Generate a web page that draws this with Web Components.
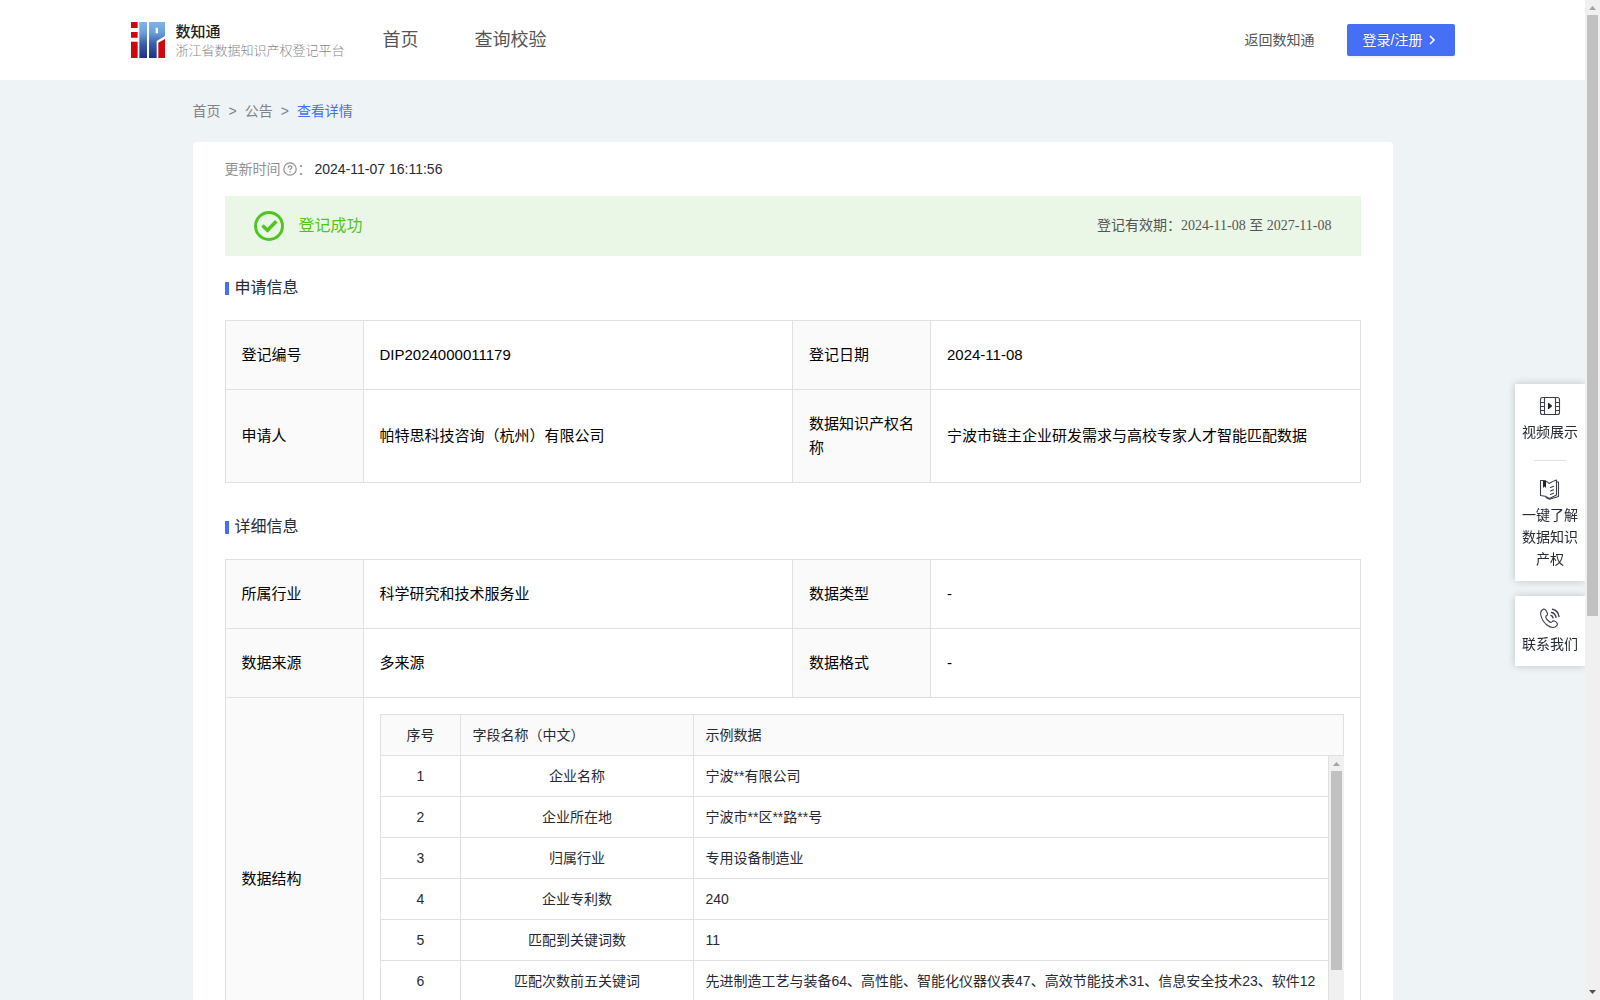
<!DOCTYPE html>
<html lang="zh-CN">
<head>
<meta charset="utf-8">
<title>数知通 - 查看详情</title>
<style>
  html, body { margin: 0; height: 100%; }
  body {
    overflow: hidden;
    background: #eef3f6;
    color: #262a35;
    font: 14px/22px "Liberation Sans", "Noto Sans CJK SC", sans-serif;
  }
</style>
</head>
<body>
<registry-page></registry-page>

<script>
const define = (name, html, setup) => {
  const tpl = document.createElement('template');
  tpl.innerHTML = html;
  customElements.define(name, class extends HTMLElement {
    connectedCallback() {
      if (this.shadowRoot) return;
      const root = this.attachShadow({ mode: 'open' });
      root.append(tpl.content.cloneNode(true));
      if (setup) setup(root, this);
    }
  });
};

/* Scroll rail with arrows; --thumb is the thumb length */
define('scroll-rail', `
<style>
  :host { display: flex; flex-direction: column; align-items: center; width: 15px; flex: none; background: #f0f0f0; }
  svg { display: block; width: 15px; height: 15px; flex: none; }
  .thumb { width: 11px; height: var(--thumb); background: #c1c1c1; flex: none; }
  .rest { flex: 1; }
</style>
<svg viewBox="0 0 15 15"><path d="M4 10L7.500 6L11 10Z" fill="#a3a3a3"/></svg>
<div class="thumb"></div><div class="rest"></div>
<svg viewBox="0 0 15 15"><path d="M4 5L7.500 9L11 5Z" fill="#505050"/></svg>`);

define('brand-logo', `
<style>
  :host { display: block; }
  a { display: flex; align-items: center; gap: 11px; text-decoration: none; font-family: "Noto Sans CJK SC", sans-serif; }
  svg { width: 34px; height: 36px; flex: none; }
  b { display: block; font-size: 15px; line-height: 20px; font-weight: 500; color: #222; }
  small { display: block; font-size: 13px; line-height: 18px; font-weight: 300; color: #888; }
</style>
<a href="#">
  <svg viewBox="0 0 102 108" aria-hidden="true">
    <defs><linearGradient id="g" gradientUnits="userSpaceOnUse" x1="0" y1="0" x2="0" y2="108">
      <stop offset="0" stop-color="#7fb4e8"/><stop offset=".3" stop-color="#6a9fdb"/><stop offset=".6" stop-color="#3c5fae"/><stop offset="1" stop-color="#1f3180"/>
    </linearGradient></defs>
    <path fill="#d0060c" d="M0 0H20V18H0ZM0 30H20V47H0ZM0 59H20V108H0ZM82 62L102 51V108H82Z"/>
    <path fill="url(#g)" d="M25 0H48V108H25ZM54 0H102V42L77 57V108H54ZM74 17V34H81V17Z" fill-rule="evenodd"/>
  </svg>
  <span><b>数知通</b><small>浙江省数据知识产权登记平台</small></span>
</a>`);

define('page-header', `
<style>
  :host { display: block; background: #fff; }
  .inner { display: flex; align-items: center; max-width: 1324px; height: 80px; margin: 0 auto; color: #555; }
  nav { display: flex; gap: 56px; margin-left: 38px; flex: 1; }
  nav a { font-size: 18px; line-height: 28px; }
  a { color: inherit; text-decoration: none; }
  button {
    display: flex; align-items: center; gap: 4px; height: 32px; margin-left: 32px; padding: 0 18px 0 16px;
    border: 0; border-radius: 2px; background: #456ff5; color: #fff; font: inherit;
    box-shadow: 0 2px 0 rgba(0,0,0,.045); text-shadow: 0 -1px 0 rgba(0,0,0,.12);
  }
  svg { width: 10px; height: 10px; }
</style>
<div class="inner">
  <brand-logo></brand-logo>
  <nav><a href="#">首页</a><a href="#">查询校验</a></nav>
  <a href="#">返回数知通</a>
  <button type="button">登录/注册<svg viewBox="0 0 10 10" fill="none" stroke="#fff" stroke-width="1.500"><path d="M3 1L7 5L3 9"/></svg></button>
</div>`);

define('bread-crumb', `
<style>
  :host { display: block; }
  nav { display: flex; gap: 8px; line-height: 62px; color: #808285; }
  a { color: inherit; text-decoration: none; }
  a[aria-current] { color: #456ff5; }
</style>
<nav aria-label="breadcrumb"><a href="#">首页</a><span>&gt;</span><a href="#">公告</a><span>&gt;</span><a href="#" aria-current="page">查看详情</a></nav>`);

define('update-time', `
<style>
  :host { display: flex; align-items: center; color: #8f9196; }
  svg { width: 14px; height: 14px; margin: 0 1px 0 2px; }
  time { color: #262a35; margin-left: 3px; }
</style>
<span>更新时间</span>
<svg viewBox="0 0 14 14" fill="none" stroke="#8f9196" stroke-width="1.200"><circle cx="7" cy="7" r="6.200"/><path d="M5.200 5.700C5.200 3.400 8.800 3.400 8.800 5.500C8.800 6.900 7 6.800 7 8.300"/><path d="M7 9.300V10.600"/></svg>
<span>：</span><time><slot></slot></time>`);

define('status-banner', `
<style>
  :host { display: flex; align-items: center; height: 60px; margin: 16px 0 20px; padding: 0 29px; background: #ebf7e6; }
  svg { width: 30px; height: 30px; margin-right: 15px; }
  strong { flex: 1; font-size: 16px; font-weight: 400; color: #52c41a; }
  span { color: #555; font-family: "Liberation Serif", "Noto Sans CJK SC", serif; }
</style>
<svg viewBox="0 0 30 30" fill="none" stroke="#4dc71f"><circle cx="15" cy="15" r="13.500" stroke-width="3"/><path d="M8.500 14.500L13.500 19.300L22.300 10.200" stroke-width="3.600"/></svg>
<strong>登记成功</strong>
<span><slot></slot></span>`);

define('section-title', `
<style>
  :host { display: block; }
  h2 { display: flex; align-items: center; gap: 6px; margin: 0 0 20px; font-size: 16px; line-height: 24px; font-weight: 400; }
  h2::before { content: ""; width: 4px; height: 13px; background: #456ff5; }
</style>
<h2><slot></slot></h2>`);

/* Inner list of data fields, with its own scroll area */
define('field-table', `
<style>
  :host { display: block; font-size: 14px; line-height: 22px; color: #262a35; }
  table { width: 100%; border-collapse: separate; border-spacing: 0; table-layout: fixed; border-left: 1px solid #e0e0e0; }
  th, td { height: 41px; padding: 0 11px 0 12px; box-sizing: border-box; border-right: 1px solid #e0e0e0; border-bottom: 1px solid #e0e0e0; font-weight: 400; text-align: left; white-space: nowrap; }
  .no { width: 80px; text-align: center; }
  .name { width: 233px; }
  td.name { text-align: center; }
  thead th { background: #fafafa; }
  .head { border-top: 1px solid #e0e0e0; }
  .body { display: flex; height: 288px; }
  .view { flex: 1; min-width: 0; overflow-y: auto; scrollbar-width: none; }
</style>
<table class="head"><thead><tr><th class="no">序号</th><th class="name">字段名称（中文）</th><th>示例数据</th></tr></thead></table>
<div class="body">
  <div class="view"><table><tbody></tbody></table></div>
  <scroll-rail style="--thumb:199px"></scroll-rail>
</div>`, root => {
  const rows = [
    ['企业名称', '宁波**有限公司'],
    ['企业所在地', '宁波市**区**路**号'],
    ['归属行业', '专用设备制造业'],
    ['企业专利数', '240'],
    ['匹配到关键词数', '11'],
    ['匹配次数前五关键词', '先进制造工艺与装备64、高性能、智能化仪器仪表47、高效节能技术31、信息安全技术23、软件12']
  ];
  root.querySelector('tbody').innerHTML = rows.map(([n, v], i) =>
    `<tr><td class="no">${i + 1}</td><td class="name">${n}</td><td>${v}</td></tr>`).join('');
});

const infoSets = {
  apply: [
    ['登记编号', 'DIP2024000011179', '登记日期', '2024-11-08'],
    ['申请人', '帕特思科技咨询（杭州）有限公司', '数据知识产权名称', '宁波市链主企业研发需求与高校专家人才智能匹配数据']
  ],
  detail: [
    ['所属行业', '科学研究和技术服务业', '数据类型', '-'],
    ['数据来源', '多来源', '数据格式', '-'],
    ['数据结构', '<field-table></field-table>']
  ]
};
define('info-table', `
<style>
  :host { display: block; margin-bottom: 32px; font-size: 15px; line-height: 24px; color: #000; }
  table { width: 100%; border-spacing: 0; table-layout: fixed; border-left: 1px solid #e0e0e0; border-top: 1px solid #e0e0e0; }
  th, td { padding: 22px 16px; text-align: left; font-weight: 400; border-right: 1px solid #e0e0e0; border-bottom: 1px solid #e0e0e0; }
  th { padding-right: 14px; background: #fafafa; }
  .wide { padding: 16px; }
  .label { width: 138px; }
</style>
<table><colgroup><col class="label"><col><col class="label"><col></colgroup><tbody></tbody></table>`, (root, host) => {
  root.querySelector('tbody').innerHTML = infoSets[host.getAttribute('name')].map(r =>
    r.length === 2
      ? `<tr><th scope="row">${r[0]}</th><td class="wide" colspan="3">${r[1]}</td></tr>`
      : `<tr><th scope="row">${r[0]}</th><td>${r[1]}</td><th scope="row">${r[2]}</th><td>${r[3]}</td></tr>`).join('');
});

define('dock-item', `
<style>
  :host { display: block; }
  a { display: flex; flex-direction: column; align-items: center; gap: 4px; padding: 11px 7px; color: inherit; text-align: center; text-decoration: none; }
  ::slotted(svg) { width: 22px; height: 22px; }
</style>
<a href="#"><slot name="icon"></slot><span><slot></slot></span></a>`);

define('side-dock', `
<style>
  :host { display: flex; flex-direction: column; gap: 15px; width: 70px; }
  section { background: #fff; box-shadow: 0 0 8px rgba(0,0,0,.2); clip-path: inset(-12px 0 -12px -12px); }
  hr { width: 32px; height: 1px; margin: 6px auto; border: 0; background: #e0e0e0; }
  svg { fill: none; stroke: #3c3f48; stroke-width: 1.100; stroke-linecap: round; stroke-linejoin: round; }
</style>
<section>
  <dock-item>
    <svg slot="icon" viewBox="0 0 22 22"><rect x="1.500" y="2.500" width="19" height="17" rx="2"/><path d="M5.500 2.500V19.500M16.500 2.500V19.500M1.500 7.500H5.500M1.500 11.500H5.500M1.500 15.500H5.500M16.500 7.500H20.500M16.500 11.500H20.500M16.500 15.500H20.500"/><path d="M9.500 8.500V13.500L12.500 11Z" fill="#20242e" stroke="#20242e"/></svg>
    视频展示
  </dock-item>
  <hr>
  <dock-item>
    <svg slot="icon" viewBox="0 0 22 22"><path d="M1.500 2.500Q7 2 10 5.500Q13 3.500 17.500 2V17L10.500 20.500Q6.500 17.500 1.500 17.500Z"/><path d="M17.500 4H19.500V18.500L10.500 21.200L7 19.500M11.500 9.500L14.500 8.200M11.500 13L14.500 11.800M11.500 16.500L14.500 15.300"/><path d="M4 2.500H7V10L5.500 8.500L4 10Z" fill="#20242e" stroke="none"/></svg>
    一键了解数据知识产权
  </dock-item>
</section>
<section>
  <dock-item>
    <svg slot="icon" viewBox="0 0 22 22"><path d="M3.300 2.800Q1.200 4.500 1.800 8Q3 14 8 18Q12.500 21.500 16 20Q18.500 18.800 18.500 17Q18 15 15.500 14Q13.800 13.400 12.800 15Q12 16.200 10.200 14.500Q7.200 12 6.800 10.300Q6.600 9.200 7.700 8.600Q9 7.800 8.300 6Q7.200 3.200 5.800 2.300Q4.500 1.800 3.300 2.800Z"/><path d="M12 8.500Q13.800 9 14 10.800M12.500 5.500Q16.200 6.200 17 10.200M13.500 2.200Q19 3.200 20 9.500" stroke-width="1.400"/></svg>
    联系我们
  </dock-item>
</section>`);

define('registry-page', `
<style>
  :host { display: flex; height: 100vh; }
  .view { flex: 1; min-width: 0; overflow-y: auto; scrollbar-width: none; }
  main { max-width: 1200px; margin: 0 auto; }
  article { padding: 16px 32px 32px; background: #fff; border-radius: 4px; }
  side-dock { position: fixed; right: 15px; top: 384px; }
</style>
<div class="view">
  <page-header></page-header>
  <main>
    <bread-crumb></bread-crumb>
    <article>
      <update-time>2024-11-07 16:11:56</update-time>
      <status-banner>登记有效期：2024-11-08 至 2027-11-08</status-banner>
      <section-title>申请信息</section-title>
      <info-table name="apply"></info-table>
      <section-title>详细信息</section-title>
      <info-table name="detail"></info-table>
    </article>
  </main>
</div>
<side-dock></side-dock>
<scroll-rail style="--thumb:601px"></scroll-rail>`);
</script>
</body>
</html>
